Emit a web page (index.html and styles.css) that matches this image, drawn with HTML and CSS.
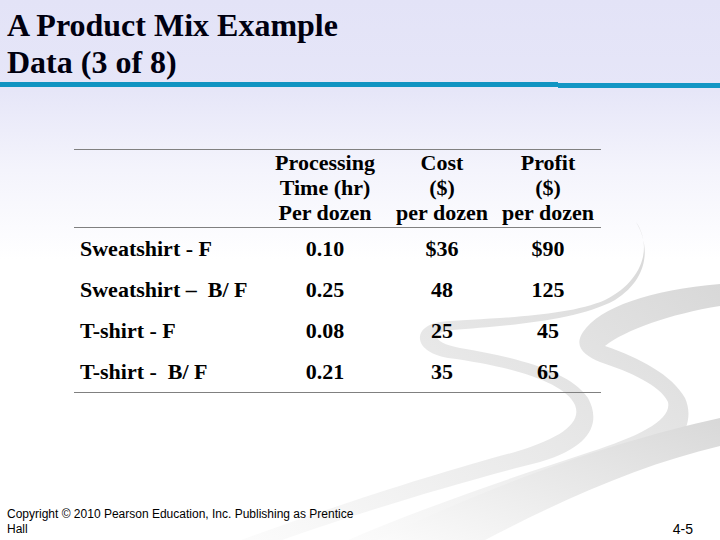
FILE: index.html
```html
<!DOCTYPE html>
<html>
<head>
<meta charset="utf-8">
<link rel="stylesheet" href="styles.css">
</head>
<body>
<div class="slide">
  <svg class="swoosh" width="720" height="540" viewBox="0 0 720 540" aria-hidden="true">
    <defs>
      <linearGradient id="g2" x1="0" y1="1" x2="1" y2="0">
        <stop offset="0" stop-color="#fdfdfd"/>
        <stop offset="0.5" stop-color="#eaeaea"/>
        <stop offset="1" stop-color="#d8d8d8"/>
      </linearGradient>
    </defs>
    <path fill="url(#g2)" d="M636,222 C652,245 645,280 605,300 C565,318 480,318 440,322 C412,326 412,352 448,358 C510,366 565,382 575,405 C583,425 555,440 515,452 C440,472 320,510 220,548 L260,548 C350,515 460,482 540,462 C595,446 600,420 588,398 C570,372 520,358 460,348 C432,343 430,332 452,330 C500,326 575,322 615,300 C650,278 650,245 636,222 Z"/>
    <path fill="url(#g2)" d="M720,284 C650,290 600,307 583,332 C573,347 585,356 600,362 C630,372 660,385 668,402 C672,420 640,436 590,452 C510,478 410,512 330,548 L410,548 C490,515 580,488 635,468 C685,450 695,420 685,398 C672,375 640,358 605,346 C625,330 670,314 720,306 Z"/>
    <path fill="url(#g2)" d="M720,418 C620,440 500,480 360,548 L470,548 C560,500 640,465 720,446 Z"/>
  </svg>

  <header class="title-bar">
    <h1 class="title">A Product Mix Example<br>Data (3 of 8)</h1>
  </header>
  <div class="accent">
    <span class="accent-left"></span>
    <span class="accent-right"></span>
  </div>

  <main class="content">
    <div class="table">
      <div class="thead">
        <div class="cell label"></div>
        <div class="cell num">Processing<br>Time (hr)<br>Per dozen</div>
        <div class="cell num">Cost<br>($)<br>per dozen</div>
        <div class="cell num">Profit<br>($)<br>per dozen</div>
      </div>
      <div class="tbody">
        <div class="row">
          <div class="cell label">Sweatshirt - F</div>
          <div class="cell num">0.10</div>
          <div class="cell num">$36</div>
          <div class="cell num">$90</div>
        </div>
        <div class="row">
          <div class="cell label">Sweatshirt –&nbsp; B/ F</div>
          <div class="cell num">0.25</div>
          <div class="cell num">48</div>
          <div class="cell num">125</div>
        </div>
        <div class="row">
          <div class="cell label">T-shirt - F</div>
          <div class="cell num">0.08</div>
          <div class="cell num">25</div>
          <div class="cell num">45</div>
        </div>
        <div class="row">
          <div class="cell label">T-shirt -&nbsp; B/ F</div>
          <div class="cell num">0.21</div>
          <div class="cell num">35</div>
          <div class="cell num">65</div>
        </div>
      </div>
    </div>
  </main>

  <footer class="footer">
    <p class="copyright">Copyright © 2010 Pearson Education, Inc. Publishing as Prentice Hall</p>
    <p class="page-num">4-5</p>
  </footer>
</div>
</body>
</html>
```
FILE: styles.css
```css
html, body {
  margin: 0;
  padding: 0;
}

body {
  width: 720px;
  height: 540px;
  overflow: hidden;
  background: #ffffff;
}

.slide {
  position: relative;
  width: 720px;
  height: 540px;
  display: flex;
  flex-direction: column;
  background: linear-gradient(to bottom, #e3e3f7 0px, #e6e6f8 90px, #f4f4fc 170px, #ffffff 260px);
  overflow: hidden;
}

.swoosh {
  position: absolute;
  left: 0;
  top: 0;
  z-index: 0;
}

.title-bar,
.accent,
.content,
.footer {
  position: relative;
  z-index: 1;
}

.title-bar {
  padding: 7px 0 0 7px;
  height: 82px;
  box-sizing: border-box;
}

.title {
  margin: 0;
  font-family: "Liberation Serif", "Times New Roman", serif;
  font-weight: bold;
  font-size: 32px;
  line-height: 37px;
  color: #000010;
}

.accent {
  display: flex;
  height: 6px;
}

.accent-left {
  flex: 0 0 558px;
  height: 5px;
  background: #1094c2;
}

.accent-right {
  flex: 1;
  height: 5px;
  margin-top: 1px;
  background: #1396c4;
}

.content {
  padding: 61px 0 0 74px;
}

.table {
  width: 527px;
  font-family: "Liberation Serif", "Times New Roman", serif;
  font-weight: bold;
  font-size: 22px;
  color: #000000;
  border-top: 1px solid #808080;
  border-bottom: 1px solid #808080;
}

.thead,
.row {
  display: grid;
  grid-template-columns: 194px 114px 120px 92px;
}

.thead {
  line-height: 25px;
  padding-bottom: 2px;
  border-bottom: 1px solid #808080;
}

.row {
  height: 41px;
  line-height: 41px;
}

.cell.label {
  padding-left: 6px;
  white-space: nowrap;
}

.cell.num {
  text-align: center;
  white-space: nowrap;
}

.footer {
  margin-top: auto;
  display: flex;
  justify-content: space-between;
  align-items: flex-end;
  padding: 0 27px 3px 7px;
  font-family: "Liberation Sans", Arial, sans-serif;
  color: #000000;
}

.copyright {
  margin: 0;
  width: 360px;
  font-size: 12px;
  line-height: 15px;
}

.page-num {
  margin: 0;
  font-size: 14px;
  line-height: 16px;
}
```
